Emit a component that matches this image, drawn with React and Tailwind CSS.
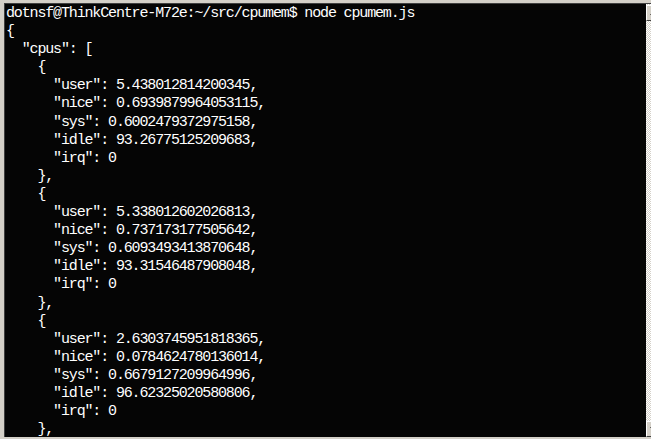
export default function App() {
  const lines = [
    'dotnsf@ThinkCentre-M72e:~/src/cpumem$ node cpumem.js',
    '{',
    '  "cpus": [',
    '    {',
    '      "user": 5.438012814200345,',
    '      "nice": 0.6939879964053115,',
    '      "sys": 0.6002479372975158,',
    '      "idle": 93.26775125209683,',
    '      "irq": 0',
    '    },',
    '    {',
    '      "user": 5.338012602026813,',
    '      "nice": 0.737173177505642,',
    '      "sys": 0.6093493413870648,',
    '      "idle": 93.31546487908048,',
    '      "irq": 0',
    '    },',
    '    {',
    '      "user": 2.6303745951818365,',
    '      "nice": 0.0784624780136014,',
    '      "sys": 0.6679127209964996,',
    '      "idle": 96.62325020580806,',
    '      "irq": 0',
    '    },',
  ];
  return (
    <div className="w-[651px] h-[439px] overflow-hidden bg-[#d4d0c8] pt-[3px] pl-[4px] pb-[2px] flex flex-col">
      <div className="flex-1 flex min-h-0 border-t border-l border-[#404040]">
        <div className="w-[641px] shrink-0 bg-[#050505] overflow-hidden">
          <pre className="m-0 pl-[1px] pt-[1px] text-white text-[15px] leading-[18.1px] tracking-[-1.15px] font-['Liberation_Mono',monospace]">
            {lines.join('\n')}
          </pre>
        </div>
        <div className="w-[16px] shrink-0 flex flex-col bg-[repeating-conic-gradient(#d4d0c8_0_25%,#ffffff_0_50%)] bg-[length:2px_2px]">
          <div className="h-[16px] mt-[1px] bg-[#d4d0c8] border-t border-l border-white border-r border-b border-r-[#404040] border-b-[#404040] flex items-center justify-center">
            <div className="w-0 h-0 border-l-[4px] border-r-[4px] border-b-[4px] border-l-transparent border-r-transparent border-b-black"></div>
          </div>
          <div className="flex-1"></div>
          <div className="h-[16px] bg-[#d4d0c8] border-t border-l border-white border-r border-b border-r-[#404040] border-b-[#404040] flex items-center justify-center">
            <div className="w-0 h-0 border-l-[4px] border-r-[4px] border-t-[4px] border-l-transparent border-r-transparent border-t-black"></div>
          </div>
        </div>
      </div>
    </div>
  );
}
